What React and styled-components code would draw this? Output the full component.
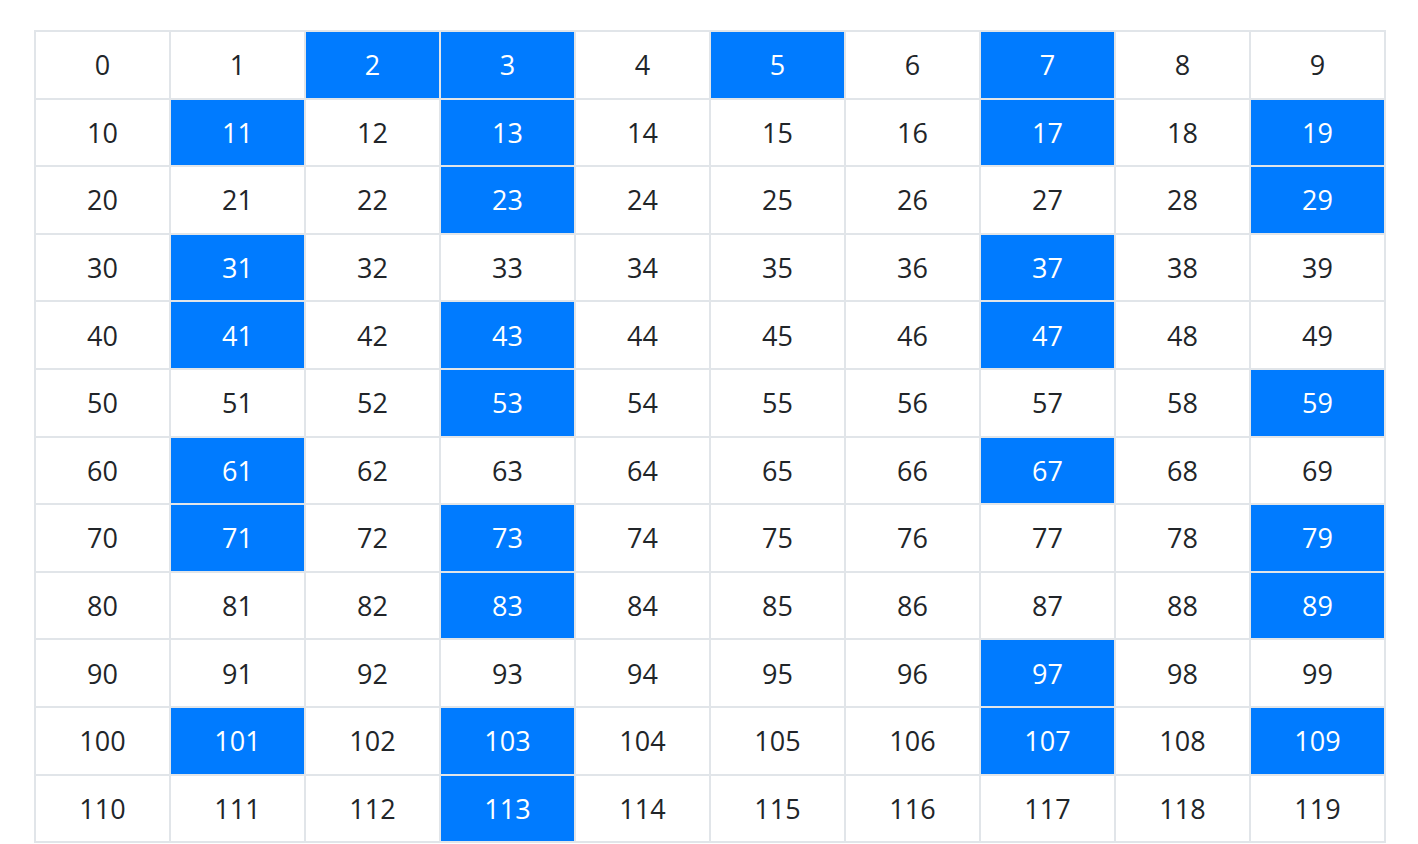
import React from 'react'
import styled, { createGlobalStyle } from 'styled-components'

const GlobalStyle = createGlobalStyle`
  html, body {
    margin: 0;
    padding: 0;
    background: #fff;
  }
  body {
    font-family: "Open Sans", "Noto Sans", sans-serif;
    color: #212529;
  }
`

const Page = styled.main`
  padding: 30px 0 0 34px;
  height: 844px;
  box-sizing: border-box;
  overflow: hidden;
`

const Grid = styled.table`
  width: 1352px;
  table-layout: fixed;
  border-collapse: collapse;
`

const Row = styled.tr`
  height: 67.6px;
`

const Cell = styled.td`
  padding: 0;
  border: 2px solid #e1e5e9;
  text-align: center;
  vertical-align: middle;
  font-size: 27px;
  line-height: 1;
  color: ${({ $prime }) => ($prime ? '#fff' : '#212529')};
  background: ${({ $prime }) => ($prime ? '#007bff' : '#fff')};
`

const isPrime = (n) => {
  if (n < 2) return false
  for (let i = 2; i * i <= n; i++) {
    if (n % i === 0) return false
  }
  return true
}

const rows = Array.from({ length: 12 }, (_, r) =>
  Array.from({ length: 10 }, (_, c) => r * 10 + c)
)

const App = () => {
  return (
    <>
      <GlobalStyle />
      <Page>
        <Grid>
          <tbody>
            {rows.map((row, i) => (
              <Row key={i}>
                {row.map((n) => (
                  <Cell key={n} $prime={isPrime(n)}>
                    {n}
                  </Cell>
                ))}
              </Row>
            ))}
          </tbody>
        </Grid>
      </Page>
    </>
  )
}

export default App
